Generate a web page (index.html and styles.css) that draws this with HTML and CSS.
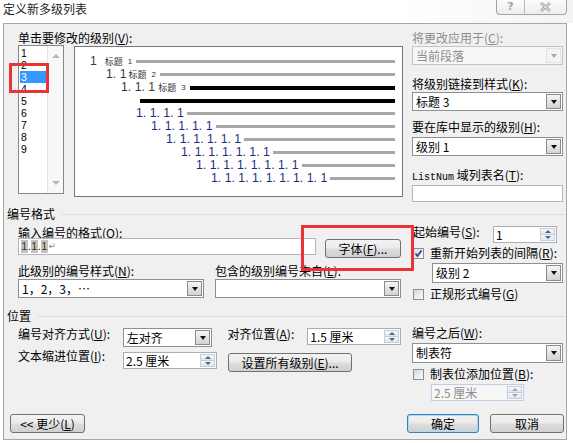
FILE: index.html
```html
<!DOCTYPE html>
<html lang="zh-CN">
<head>
    <meta charset="UTF-8">
    <meta name="viewport" content="width=device-width, initial-scale=1.0">
    <title>定义新多级列表</title>
    <link rel="stylesheet" href="styles.css">
</head>
<body>
<div class="window">
    <div class="titlebar">
        <span class="title">定义新多级列表</span>
        <div class="caption">
            <span class="cap-btn help">?</span>
            <span class="cap-btn close">
                <svg width="13" height="10" viewBox="0 0 13 10">
                    <path d="M2 1 L11 9 M11 1 L2 9" stroke="#a2a2a2" stroke-width="3" fill="none"/>
                    <path d="M2 1 L11 9 M11 1 L2 9" stroke="#fafafa" stroke-width="1" fill="none"/>
                </svg>
            </span>
        </div>
    </div>

    <div class="client">
        <!-- level picker + preview + link options -->
        <div class="top">
            <div class="levels">
                <div class="lbl">单击要修改的级别(<u>V</u>):</div>
                <div class="pick">
                    <div class="list">
                        <div class="items">
                            <div class="item">1</div>
                            <div class="item">2</div>
                            <div class="item sel">3</div>
                            <div class="item">4</div>
                            <div class="item">5</div>
                            <div class="item">6</div>
                            <div class="item">7</div>
                            <div class="item">8</div>
                            <div class="item">9</div>
                        </div>
                        <div class="vscroll"><i class="tri up"></i><i class="tri dn"></i></div>
                    </div>
                    <div class="preview">
                        <div class="pv l1"><span class="num">1</span><span class="cap">标题</span><span class="cn">1</span><i class="bar"></i></div>
                        <div class="pv l2"><span class="num">1. 1</span><span class="cap">标题</span><span class="cn">2</span><i class="bar"></i></div>
                        <div class="pv l3"><span class="num">1. 1. 1</span><span class="cap">标题</span><span class="cn">3</span><i class="bar dark"></i></div>
                        <div class="pv l3b"><i class="bar dark"></i></div>
                        <div class="pv l4"><span class="num deep">1. 1. 1. 1</span><i class="bar"></i></div>
                        <div class="pv l5"><span class="num deep">1. 1. 1. 1. 1</span><i class="bar"></i></div>
                        <div class="pv l6"><span class="num deep">1. 1. 1. 1. 1. 1</span><i class="bar"></i></div>
                        <div class="pv l7"><span class="num deep">1. 1. 1. 1. 1. 1. 1</span><i class="bar"></i></div>
                        <div class="pv l8"><span class="num deep">1. 1. 1. 1. 1. 1. 1. 1</span><i class="bar"></i></div>
                        <div class="pv l9"><span class="num deep">1. 1. 1. 1. 1. 1. 1. 1. 1</span><i class="bar"></i></div>
                    </div>
                </div>
            </div>

            <div class="side">
                <div class="lbl dim">将更改应用于(<u>C</u>):</div>
                <div class="combo off apply"><span class="val">当前段落</span><span class="drop"><i></i></span></div>
                <div class="lbl link-lbl">将级别链接到样式(<u>K</u>):</div>
                <div class="combo link"><span class="val">标题 3</span><span class="drop"><i></i></span></div>
                <div class="lbl gallery-lbl">要在库中显示的级别(<u>H</u>):</div>
                <div class="combo gallery"><span class="val">级别 1</span><span class="drop"><i></i></span></div>
                <div class="lbl listnum-lbl"><span class="mono">ListNum</span> 域列表名(<u>T</u>):</div>
                <div class="edit listnum"></div>
            </div>
        </div>

        <!-- number format -->
        <div class="group first">编号格式</div>
        <div class="mid">
            <div class="mid-left">
                <div class="lbl">输入编号的格式(<u>O</u>):</div>
                <div class="fmt-row">
                    <div class="edit fmt"><span class="fmt-text"><i class="fld">1</i><i class="dot">.</i><i class="fld">1</i><i class="dot">.</i><i class="fld">1</i></span><span class="ret">↵</span></div>
                    <div class="btn font-btn">字体(<u>F</u>)...</div>
                </div>
                <div class="lbl-row">
                    <div class="lbl style-lbl">此级别的编号样式(<u>N</u>):</div>
                    <div class="lbl">包含的级别编号来自(<u>L</u>):</div>
                </div>
                <div class="combo-row">
                    <div class="combo style"><span class="val">1，2，3，⋯</span><span class="drop"><i></i></span></div>
                    <div class="combo from"><span class="val"></span><span class="drop"><i></i></span></div>
                </div>
            </div>
            <div class="mid-right">
                <div class="start">
                    <div class="lbl">起始编号(<u>S</u>):</div>
                    <div class="spin start-val"><span class="val">1</span><span class="arrows"><i class="up"></i><i class="dn"></i></span></div>
                </div>
                <div class="chk-row restart">
                    <span class="box on">
                        <svg width="9" height="9" viewBox="0 0 9 9"><path d="M1.5 4.5 L3.5 7 L7.5 1.5" stroke="#2f4388" stroke-width="1.8" fill="none"/></svg>
                    </span>
                    <span class="lbl">重新开始列表的间隔(<u>R</u>):</span>
                </div>
                <div class="combo restart-lvl"><span class="val">级别 2</span><span class="drop"><i></i></span></div>
                <div class="chk-row legal">
                    <span class="box"></span>
                    <span class="lbl">正规形式编号(<u>G</u>)</span>
                </div>
            </div>
        </div>

        <!-- position -->
        <div class="group second">位置</div>
        <div class="pos">
            <div class="pos-left">
                <div class="pos-row row-a">
                    <div class="lbl">编号对齐方式(<u>U</u>):</div>
                    <div class="combo align"><span class="val">左对齐</span><span class="drop"><i></i></span></div>
                    <div class="lbl at">对齐位置(<u>A</u>):</div>
                    <div class="spin at-val"><span class="val">1.5 厘米</span><span class="arrows"><i class="up"></i><i class="dn"></i></span></div>
                </div>
                <div class="pos-row row-b">
                    <div class="lbl">文本缩进位置(<u>I</u>):</div>
                    <div class="spin indent"><span class="val">2.5 厘米</span><span class="arrows"><i class="up"></i><i class="dn"></i></span></div>
                    <div class="btn all">设置所有级别(<u>E</u>)...</div>
                </div>
            </div>
            <div class="pos-right">
                <div class="lbl">编号之后(<u>W</u>):</div>
                <div class="combo after"><span class="val">制表符</span><span class="drop"><i></i></span></div>
                <div class="chk-row tabstop">
                    <span class="box"></span>
                    <span class="lbl">制表位添加位置(<u>B</u>):</span>
                </div>
                <div class="spin off tab"><span class="val">2.5 厘米</span><span class="arrows"><i class="up"></i><i class="dn"></i></span></div>
            </div>
        </div>

        <div class="foot">
            <div class="btn less">&lt;&lt; 更少(<u>L</u>)</div>
            <div class="btn def ok">确定</div>
            <div class="btn cancel">取消</div>
        </div>

        <!-- red annotation boxes -->
        <div class="mark mark-level"></div>
        <div class="mark mark-font"></div>
    </div>
</div>
</body>
</html>
```

FILE: styles.css
```css
* { box-sizing: border-box; }
body { margin: 0; background: #fff; color: #000; font: 12px/14px "Noto Sans CJK SC", "Liberation Sans", sans-serif; }
u { text-decoration: underline; text-underline-offset: 1px; }
.window { width: 573px; height: 443px; }

/* title bar */
.titlebar { display: flex; height: 23px; background: linear-gradient(to right, #fff 70%, #f3f3f3); }
.title { padding: 2px 0 0 3px; color: #1e1e1e; }
.caption { display: flex; height: 16px; margin: -1px 6px 0 auto; border: 1px solid #a4a4a4; border-top: none; border-radius: 0 0 4px 4px; background: linear-gradient(#fdfdfd, #ededed); }
.cap-btn { display: flex; align-items: center; justify-content: center; }
.help { width: 28px; border-right: 1px solid #b9b9b9; color: #a2a2a2; font: bold 11px/14px "DejaVu Sans", sans-serif; }
.close { width: 41px; }

/* dialog body */
.client { position: relative; width: 564px; height: 417px; margin-left: 3px; border: 1px solid #a7a7a7; background: #f0f0f0; }
.lbl { line-height: 14px; white-space: nowrap; }
.dim { color: #8d8d8d; }
.mono { font: 10px "Liberation Mono", monospace; }

.top { display: flex; padding: 7px 0 0 14px; }
.levels { width: 385px; }
.pick { display: flex; align-items: flex-start; }

.list { display: flex; width: 46px; height: 149px; border: 1px solid #828790; background: #fff; }
.items { width: 28px; padding: 1px 0 0 1px; }
.item { height: 12px; padding-left: 1px; font: 10.5px/12px "Liberation Sans", sans-serif; }
.item.sel { background: #3399ff; color: #fff; }
.vscroll { display: flex; flex-direction: column; justify-content: space-between; align-items: center; width: 16px; padding: 8px 0 8px; border-left: 1px solid #e4e4e4; background: #f8f8f8; }
.tri { width: 0; height: 0; border-left: 4px solid transparent; border-right: 4px solid transparent; }
.tri.up { border-bottom: 4px solid #b6b6b6; }
.tri.dn { border-top: 4px solid #b6b6b6; }

.preview { width: 329px; height: 151px; margin: 1px 0 0 10px; padding: 8px 7px 0 0; border: 1px solid #767676; background: #fff; }
.pv { display: flex; align-items: center; height: 13px; white-space: pre; }
.num { font: 12.3px/13px "Liberation Sans", sans-serif; color: #3b3a36; }
.num.deep { color: #1d2d7c; }
.cap { margin-left: 3px; font-size: 9px; line-height: 13px; color: #333; }
.cn { margin-left: 5px; font: 8px/13px "Liberation Sans", sans-serif; color: #333; }
.bar { flex: 1; height: 3px; margin-left: 4px; background: #a8a8a8; }
.bar.dark { height: 4px; background: #000; }
.deep + .bar { margin-left: 3px; }
.l1 { padding-left: 15px; }
.l1 .cap { margin-left: 8px; }
.l2 { padding-left: 31px; }
.l2 .cap { margin-left: 2px; }
.l3 { padding-left: 46px; }
.l3b { padding-left: 61px; }
.l4 { padding-left: 61px; }
.l5 { padding-left: 76px; }
.l6 { padding-left: 91px; }
.l7 { padding-left: 106px; }
.l8 { padding-left: 121px; }
.l9 { padding-left: 136px; }

.side { width: 151px; margin-left: 9px; }
.apply { margin-top: 1px; }
.link-lbl { margin-top: 12px; }
.link { margin-top: 1px; }
.gallery-lbl { margin-top: 9px; }
.gallery { margin-top: 3px; }
.listnum-lbl { margin-top: 12px; }
.listnum { margin-top: 2px; }

/* controls */
.combo { display: flex; align-items: center; height: 19px; padding-left: 3px; border: 1px solid #8e8f8f; background: #fff; }
.combo .val { flex: 1; white-space: nowrap; }
.drop { display: flex; align-items: center; justify-content: center; align-self: stretch; width: 15px; margin: 1px; border: 1px solid #8b8b8b; background: linear-gradient(#f6f6f6, #e4e4e4 50%, #d4d4d4); }
.drop i { width: 0; height: 0; border-left: 3.5px solid transparent; border-right: 3.5px solid transparent; border-top: 4px solid #111; }
.combo.off { border-color: #c3c3c3; background: #f7f7f7; color: #8d8d8d; }
.combo.off .drop { border-color: #e2e2e2; background: #f4f4f4; }
.combo.off .drop i { border-top-color: #a8a8a8; }

.edit { height: 17px; border: 1px solid #b3b6bc; background: #fff; }

.spin { display: flex; align-items: center; height: 17px; padding-left: 2px; border: 1px solid #abadb3; background: #fff; }
.spin .val { flex: 1; white-space: nowrap; }
.arrows { display: flex; flex-direction: column; align-self: stretch; width: 15px; margin: 1px; }
.arrows i { display: flex; flex: 1; align-items: center; justify-content: center; border: 1px solid #c7ced8; background: linear-gradient(#f6f8fb, #dfe6ee); }
.arrows i + i { border-top: none; }
.arrows i::before { content: ""; width: 0; height: 0; border-left: 3px solid transparent; border-right: 3px solid transparent; }
.arrows .up::before { border-bottom: 3px solid #4d638c; }
.arrows .dn::before { border-top: 3px solid #4d638c; }
.spin.off { border-color: #bccfe4; background: #f6f6f6; color: #8d8d8d; }
.spin.off .arrows i::before { border-bottom-color: #a4a4a4; border-top-color: #a4a4a4; }

.btn { display: flex; align-items: center; justify-content: center; height: 19px; border: 1px solid #707070; border-radius: 3px; background: linear-gradient(#f3f3f3, #ebebeb 48%, #dddddd 52%, #d0d0d0); white-space: nowrap; }
.btn.def { border-color: #3c7fb1; box-shadow: inset 0 0 0 1px #a6dcf7; }

.chk-row { display: flex; align-items: center; height: 14px; }
.box { display: flex; align-items: center; justify-content: center; width: 11px; height: 11px; margin-left: 1px; border: 1px solid #8e8f8f; background: linear-gradient(135deg, #d8d8d8, #fbfbfb); }
.chk-row .lbl { margin-left: 6px; }

/* group headers */
.group { display: flex; align-items: center; padding-left: 3px; line-height: 14px; }
.group::after { content: ""; flex: 1; height: 1px; margin-left: 7px; background: #d5dfe5; }
.group.first { margin-top: 5px; }
.group.second { margin-top: 8px; }

/* number format */
.mid { display: flex; margin-top: 5px; padding-left: 14px; }
.mid-left { width: 383px; }
.fmt-row { display: flex; align-items: flex-start; margin-top: -2px; }
.fmt { display: flex; align-items: center; width: 298px; padding-left: 2px; }
.fmt-text { display: flex; font: 11px/13px "Liberation Sans", sans-serif; }
.fmt-text i { font-style: normal; }
.fld { width: 6.5px; background: #c2c2c2; color: #4d340c; text-align: center; }
.dot { width: 3.5px; text-align: center; }
.ret { margin-left: 1px; font: 9px/13px "DejaVu Sans", sans-serif; color: #8a8a8a; }
.font-btn { width: 76px; margin: 1px 0 0 9px; }
.lbl-row { display: flex; margin-top: 6px; }
.style-lbl { width: 197px; }
.combo-row { display: flex; margin-top: 1px; }
.combo.style { width: 186px; }
.combo.from { width: 186px; margin-left: 11px; }

.mid-right { width: 151px; margin-left: 11px; }
.start { display: flex; align-items: flex-start; }
.start .lbl { width: 81px; margin-top: -1px; padding-left: 1px; }
.start-val { width: 64px; }
.restart { margin-top: 3px; }
.combo.restart-lvl { height: 20px; margin: 3px 0 0 20px; }
.legal { margin-top: 4px; }

/* position */
.pos { display: flex; margin-top: 3px; padding-left: 14px; }
.pos-left { width: 383px; }
.pos-row { display: flex; align-items: flex-start; }
.pos-row .lbl { width: 105px; }
.row-a { margin-top: 2px; }
.row-a .lbl { margin-top: -1px; }
.combo.align { width: 90px; }
.row-a .lbl.at { width: 80px; margin-left: 15px; }
.at-val { width: 94px; }
.row-b { margin-top: 5px; }
.row-b .lbl { margin-top: -3px; }
.indent { width: 94px; }
.btn.all { width: 124px; margin: 1px 0 0 11px; }

.pos-right { width: 151px; margin-left: 11px; }
.combo.after { height: 20px; margin-top: 3px; }
.tabstop { margin-top: 4px; }
.spin.tab { width: 93px; margin: 3px 0 0 19px; }

.foot { display: flex; margin-top: 13px; padding: 0 2px 0 6px; }
.btn.less { width: 75px; }
.btn.ok { width: 72px; margin-left: auto; }
.btn.cancel { width: 74px; margin-left: 11px; }

/* red annotation frames */
.mark { position: absolute; border: 3px solid #ea3339; }
.mark-level { left: 5px; top: 39px; width: 40px; height: 30px; }
.mark-font { left: 297px; top: 201px; width: 113px; height: 46px; }
```
